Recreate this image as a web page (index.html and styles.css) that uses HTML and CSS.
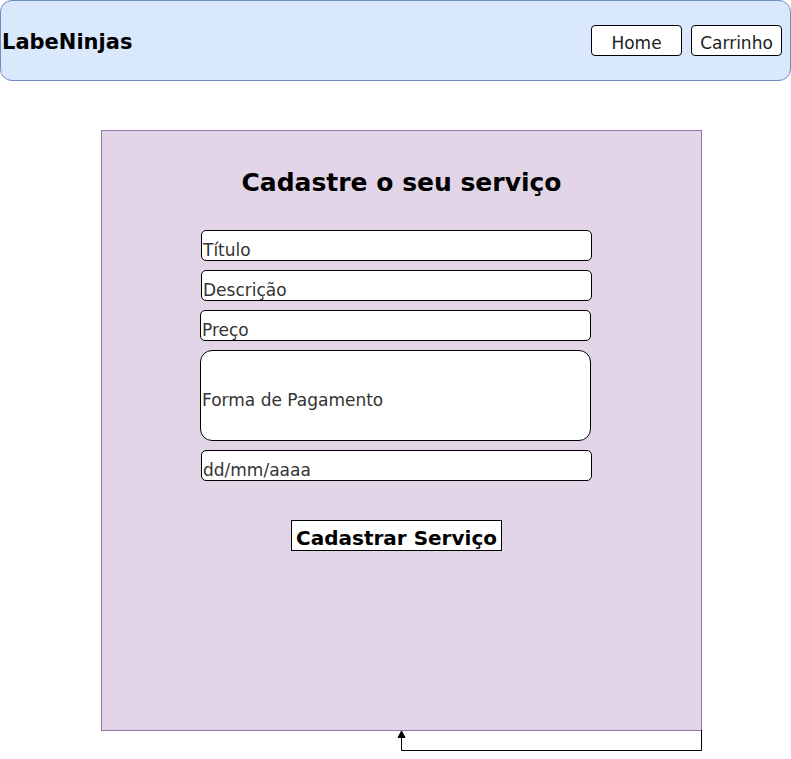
FILE: index.html
```html
<!DOCTYPE html>
<html lang="pt">
<head>
<meta charset="utf-8">
<title>LabeNinjas</title>
<link rel="stylesheet" href="styles.css">
</head>
<body>
<header class="topbar">
  <div class="logo">LabeNinjas</div>
  <nav class="nav">
    <button class="nav-btn">Home</button>
    <button class="nav-btn">Carrinho</button>
  </nav>
</header>
<main class="stage">
  <section class="panel">
    <h1 class="title">Cadastre o seu serviço</h1>
    <div class="form">
      <div class="field">Título</div>
      <div class="field">Descrição</div>
      <div class="field shift">Preço</div>
      <div class="field big shift">Forma de Pagamento</div>
      <div class="field">dd/mm/aaaa</div>
      <button class="submit">Cadastrar Serviço</button>
    </div>
  </section>
  <svg class="connector" width="302" height="22" viewBox="0 0 302 22">
    <path d="M300.5 0 V20.5 H0.5 V6" fill="none" stroke="#000" stroke-width="1"/>
    <path d="M0.5 1 L-3 7.5 L4 7.5 Z" fill="#000" stroke="#000" stroke-width="1"/>
  </svg>
</main>
</body>
</html>
```
FILE: styles.css
```css
* { box-sizing: border-box; }
body {
  margin: 0;
  width: 791px;
  height: 759px;
  overflow: hidden;
  background: #fff;
  font-family: "DejaVu Sans", Verdana, sans-serif;
  color: #000;
}
.topbar {
  width: 791px;
  height: 81px;
  background: #dae8fc;
  border: 1px solid #6c8ebf;
  border-radius: 12px;
  display: flex;
  align-items: center;
  justify-content: space-between;
}
.logo {
  font-weight: bold;
  font-size: 21px;
  padding-left: 1px;
  margin-top: 2px;
}
.nav {
  display: flex;
  gap: 9px;
  margin-right: 8px;
}
.nav-btn {
  width: 91px;
  height: 31px;
  background: #fff;
  border: 1px solid #000;
  border-radius: 4px;
  font-family: "DejaVu Sans", Verdana, sans-serif;
  font-size: 17px;
  color: #222;
  padding: 5px 0 0;
  margin: 0;
}
.stage {
  position: relative;
  padding-top: 49px;
  padding-left: 101px;
}
.panel {
  width: 601px;
  height: 601px;
  background: #e1d5e7;
  border: 1px solid #9673a6;
  display: flex;
  flex-direction: column;
}
.title {
  margin: 36px 0 0;
  font-size: 25px;
  line-height: 32px;
  text-align: center;
  font-weight: bold;
}
.form {
  margin-top: 31px;
  padding-left: 99px;
  display: flex;
  flex-direction: column;
  gap: 9px;
  align-items: flex-start;
}
.field {
  width: 391px;
  height: 31px;
  background: #fff;
  border: 1px solid #000;
  border-radius: 5px;
  font-size: 17px;
  color: #333;
  display: flex;
  align-items: flex-end;
  padding: 0 0 0 1px;
  line-height: 20px;
}
.shift { margin-left: -1px; }
.big {
  height: 91px;
  border-radius: 12px;
  align-items: center;
  padding-top: 8px;
}
.submit {
  margin: 30px 0 0 90px;
  width: 211px;
  height: 31px;
  background: #fff;
  border: 1px solid #000;
  border-radius: 0;
  font-family: "DejaVu Sans", Verdana, sans-serif;
  font-weight: bold;
  font-size: 20px;
  color: #000;
  padding: 5px 0 0;
}
.connector {
  position: absolute;
  left: 401px;
  top: 649px;
  overflow: visible;
}
```
